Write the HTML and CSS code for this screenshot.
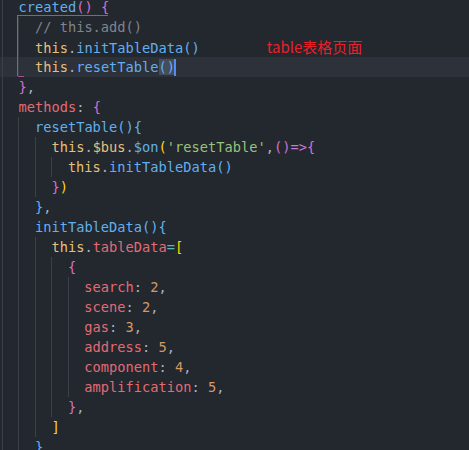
FILE: index.html
```html
<!DOCTYPE html>
<html>
<head>
<meta charset="utf-8">
<link rel="stylesheet" href="styles.css">
</head>
<body>
<div class="code">
  <div class="bguide"></div>
  <div class="line"><span class="g"></span><span class="f">created</span><span class="b2">()</span> <span class="b2">{</span></div>
  <div class="line"><span class="g"></span><span class="g"></span><span class="c">// this.add()</span></div>
  <div class="line"><span class="g"></span><span class="g"></span><span class="t">this</span>.<span class="f">initTableData</span><span class="b3">()</span><span class="note">table表格页面</span></div>
  <div class="line cur"><span class="g"></span><span class="g"></span><span class="t">this</span>.<span class="f">resetTable</span><span class="sel"><span class="b3">()</span></span><span class="caret"></span></div>
  <div class="line"><span class="g"></span><span class="b2">}</span>,</div>
  <div class="line"><span class="g"></span><span class="p">methods</span>: <span class="b2">{</span></div>
  <div class="line"><span class="g"></span><span class="g"></span><span class="f">resetTable</span><span class="b3">(){</span></div>
  <div class="line"><span class="g"></span><span class="g"></span><span class="g"></span><span class="t">this</span>.<span class="t">$bus</span>.<span class="f">$on</span><span class="b1">(</span><span class="s">'resetTable'</span>,<span class="b2">()</span><span class="k">=&gt;</span><span class="b2">{</span></div>
  <div class="line"><span class="g"></span><span class="g"></span><span class="g"></span><span class="g"></span><span class="t">this</span>.<span class="f">initTableData</span><span class="b3">()</span></div>
  <div class="line"><span class="g"></span><span class="g"></span><span class="g"></span><span class="b2">}</span><span class="b1">)</span></div>
  <div class="line"><span class="g"></span><span class="g"></span><span class="b3">}</span>,</div>
  <div class="line"><span class="g"></span><span class="g"></span><span class="f">initTableData</span><span class="b3">(){</span></div>
  <div class="line"><span class="g"></span><span class="g"></span><span class="g"></span><span class="t">this</span>.<span class="p">tableData</span><span class="o">=</span><span class="b1">[</span></div>
  <div class="line"><span class="g"></span><span class="g"></span><span class="g"></span><span class="g"></span><span class="b2">{</span></div>
  <div class="line"><span class="g"></span><span class="g"></span><span class="g"></span><span class="g"></span><span class="g"></span><span class="p">search</span>: <span class="n">2</span>,</div>
  <div class="line"><span class="g"></span><span class="g"></span><span class="g"></span><span class="g"></span><span class="g"></span><span class="p">scene</span>: <span class="n">2</span>,</div>
  <div class="line"><span class="g"></span><span class="g"></span><span class="g"></span><span class="g"></span><span class="g"></span><span class="p">gas</span>: <span class="n">3</span>,</div>
  <div class="line"><span class="g"></span><span class="g"></span><span class="g"></span><span class="g"></span><span class="g"></span><span class="p">address</span>: <span class="n">5</span>,</div>
  <div class="line"><span class="g"></span><span class="g"></span><span class="g"></span><span class="g"></span><span class="g"></span><span class="p">component</span>: <span class="n">4</span>,</div>
  <div class="line"><span class="g"></span><span class="g"></span><span class="g"></span><span class="g"></span><span class="g"></span><span class="p">amplification</span>: <span class="n">5</span>,</div>
  <div class="line"><span class="g"></span><span class="g"></span><span class="g"></span><span class="g"></span><span class="b2">}</span>,</div>
  <div class="line"><span class="g"></span><span class="g"></span><span class="g"></span><span class="b1">]</span></div>
  <div class="line"><span class="g"></span><span class="g"></span><span class="b3">}</span></div>
</div>
</body>
</html>
```
FILE: styles.css
```css
html, body {
  margin: 0;
  padding: 0;
  background: #23272e;
  overflow: hidden;
}
.code {
  position: relative;
  margin-top: -3px;
  padding-left: 2px;
  font-family: "DejaVu Sans Mono", "Liberation Mono", monospace;
  font-size: 13.7px;
  color: #abb2bf;
}
.line {
  height: 20px;
  line-height: 20px;
  white-space: pre;
}
.line.cur {
  background: #2c313a;
  margin-left: -2px;
  padding-left: 2px;
}
.g {
  display: inline-block;
  width: 2ch;
  height: 20px;
  vertical-align: top;
  box-shadow: inset 1px 0 0 #3a3f48;
}
.f { color: #61afef; }
.t { color: #e5c07b; }
.p { color: #e06c75; }
.c { color: #7f848e; }
.s { color: #98c379; }
.n { color: #d19a66; }
.o { color: #56b6c2; }
.k { color: #c678dd; }
.b1 { color: #ffd700; }
.b2 { color: #d070d0; }
.b3 { color: #5fb3f0; }
.sel {
  background: #454c5a;
}
.caret {
  display: inline-block;
  width: 2px;
  height: 17px;
  margin-left: -1px;
  vertical-align: -4px;
  background: #528bff;
}
.note {
  margin-left: 67px;
  font-family: "Noto Sans CJK SC", sans-serif;
  font-size: 15px;
  color: #e8202a;
}
.bguide {
  position: absolute;
  left: 16.5px;
  top: 18px;
  width: 91px;
  height: 61px;
  border-top: 1px solid #a0509a;
  border-left: 1px solid #a0509a;
  box-sizing: border-box;
}
.bguide::after {
  content: "";
  position: absolute;
  left: 0;
  bottom: -1px;
  width: 6px;
  height: 1px;
  background: #a0509a;
}
```
